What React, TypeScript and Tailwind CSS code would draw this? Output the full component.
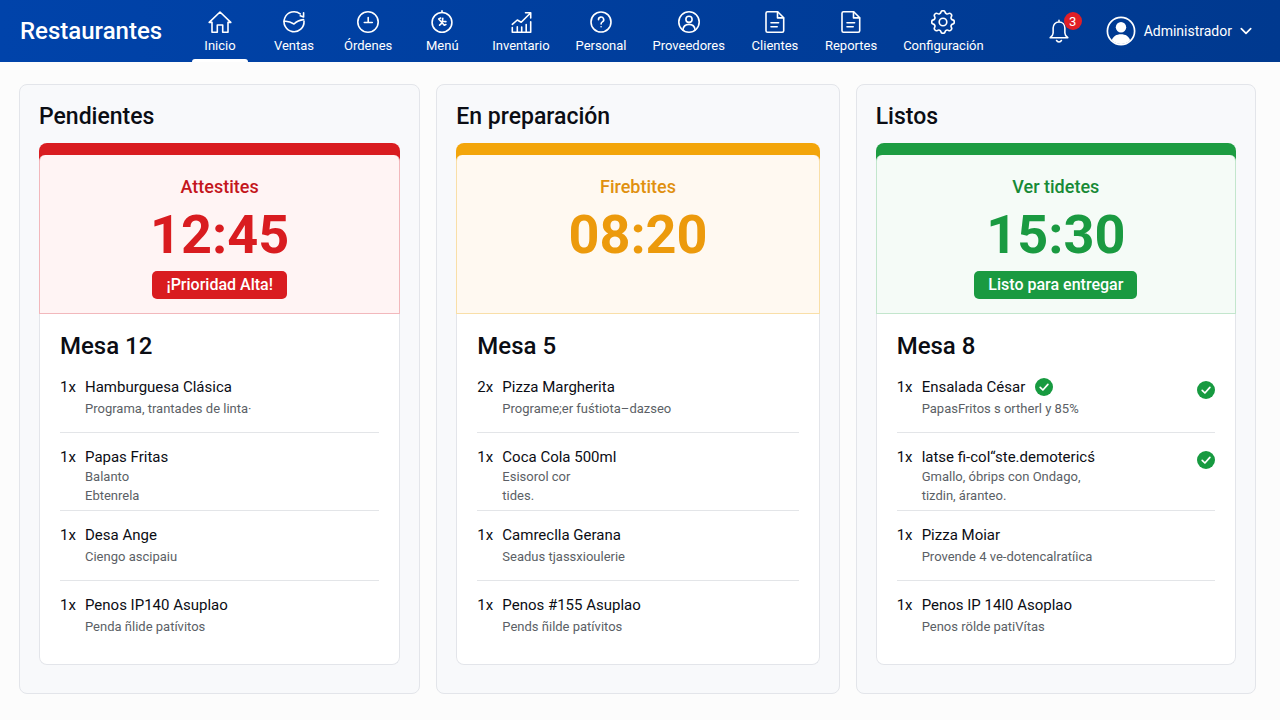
import { type ReactNode } from "react";
import { clsx } from "clsx";

// ---------------------------------------------------------------- icons

interface GlyphProps {
  readonly children: ReactNode;
  readonly viewBox?: string;
  readonly className?: string;
}

function Glyph({ children, viewBox = "0 0 24 24", className = "size-6 stroke-[1.6]" }: GlyphProps) {
  return (
    <svg
      aria-hidden
      viewBox={viewBox}
      fill="none"
      stroke="currentColor"
      strokeLinecap="round"
      strokeLinejoin="round"
      className={clsx("shrink-0", className)}
    >
      {children}
    </svg>
  );
}

const IconHome = () => (
  <Glyph>
    <path d="M1.2 12.4 12 2l10.8 10.4H20v9.9h-5.3V15H9.3v7.3H4v-9.9z" />
  </Glyph>
);

const IconSales = () => (
  <Glyph>
    <path d="M18.2 3.9A10 10 0 1 0 22 11" />
    <path d="M2.2 11.4c3-.4 6.6.6 9.8 2.6 2.6-2.6 5.6-4 9.6-4.4" />
    <path d="M18.3 5.700 21.600 7V2.800" />
  </Glyph>
);

const IconOrders = () => (
  <Glyph>
    <circle cx="12" cy="12" r="10.2" />
    <path d="M12.2 7.6v4.9M8.300 12.500h8" />
  </Glyph>
);

const IconMenu = () => (
  <Glyph>
    <circle cx="12" cy="12.400" r="9.900" />
    <path d="M12 .8v1.700" />
    <path d="m8.700 9 5.600 6.200M8.700 9l2-.9M12.800 8.300l-.4 2.900 3.500.4M9.600 15.200l1.700-1.500M14.300 15.200l1.600-.6" />
  </Glyph>
);

const IconInventory = () => (
  <Glyph>
    <path d="m3.300 14.300 5-4.300 3.900 2.300 9.300-9.300M16.500 2.800h5.200V8" />
    <path d="M3.300 17.500v4.800h18.400V11.800M8.300 16.700v5.600M12.700 17v5.300M17.200 14.500v7.800" />
  </Glyph>
);

const IconHelp = () => (
  <Glyph>
    <circle cx="12" cy="12" r="10" />
    <path d="M9.500 9.700a2.600 2.600 0 1 1 3.900 2.200c-.9.500-1.300 1-1.300 2.100M12.100 16.700v.1" />
  </Glyph>
);

const IconSuppliers = () => (
  <Glyph>
    <circle cx="12" cy="12" r="10.200" />
    <circle cx="12" cy="9.300" r="3.100" />
    <path d="M5.900 20c.4-3.600 2.800-5.600 6.100-5.600s5.700 2 6.100 5.600" />
  </Glyph>
);

const IconFile = () => (
  <Glyph>
    <path d="M4.500 1.700h10.200l6 6v13.100c0 .9-.6 1.500-1.500 1.500H4.500c-.9 0-1.500-.6-1.500-1.500V3.200c0-.9.600-1.500 1.500-1.500z" />
    <path d="M14.500 1.900v6h6M8 12.800h7.600M8 16.800h6.200" />
  </Glyph>
);

const IconGear = () => (
  <Glyph viewBox="2.5 2.5 19 19" className="size-6 stroke-[1.3]">
    <path d="M10.325 4.317c.426-1.756 2.924-1.756 3.350 0a1.724 1.724 0 0 0 2.573 1.066c1.543-.94 3.310.826 2.370 2.370a1.724 1.724 0 0 0 1.065 2.572c1.756.426 1.756 2.924 0 3.350a1.724 1.724 0 0 0-1.066 2.573c.94 1.543-.826 3.310-2.370 2.370a1.724 1.724 0 0 0-2.572 1.065c-.426 1.756-2.924 1.756-3.350 0a1.724 1.724 0 0 0-2.573-1.066c-1.543.94-3.310-.826-2.370-2.370a1.724 1.724 0 0 0-1.065-2.572c-1.756-.426-1.756-2.924 0-3.350a1.724 1.724 0 0 0 1.066-2.573c-.94-1.543.826-3.310 2.370-2.370.996.608 2.296.07 2.572-1.065z" />
    <circle cx="12" cy="12" r="3" />
  </Glyph>
);

const IconBell = () => (
  <Glyph viewBox="0 0 24 28" className="h-[26px] w-[22px] stroke-[1.7]">
    <path d="M12 2.400v1.800M12 4.200c-3.900 0-6.400 2.800-6.400 6.600v5.400c0 2.100-1.100 3.400-3.200 5.100h19.200c-2.100-1.700-3.200-3-3.200-5.100v-5.400c0-3.800-2.500-6.600-6.400-6.600z" />
    <path d="M9.300 24.300c.5 1.100 1.500 1.600 2.700 1.600s2.200-.5 2.700-1.600" />
  </Glyph>
);

const IconAvatar = () => (
  <Glyph viewBox="0 0 30 30" className="size-[30px] stroke-[1.7]">
    <circle cx="15" cy="15" r="13.600" />
    <circle cx="15" cy="11.200" r="5.200" fill="currentColor" stroke="none" />
    <path
      d="M5.900 24.300c1-3.900 4.600-6 9.100-6s8.100 2.100 9.100 6a13 13 0 0 1-18.200 0z"
      fill="currentColor"
      stroke="none"
    />
  </Glyph>
);

const IconChevronDown = () => (
  <Glyph viewBox="0 0 12 12" className="size-3 stroke-[1.7]">
    <path d="m1.300 3.600 4.700 4.700 4.700-4.700" />
  </Glyph>
);

function ReadyMark() {
  return (
    <svg role="img" aria-label="Listo" viewBox="0 0 18 18" className="size-[18px] shrink-0">
      <circle cx="9" cy="9" r="9" fill="#179a40" />
      <path
        d="m5.200 9.400 2.700 2.600 5-5.600"
        fill="none"
        stroke="#fff"
        strokeWidth="1.7"
        strokeLinecap="round"
        strokeLinejoin="round"
      />
    </svg>
  );
}

// ---------------------------------------------------------------- data

const NAV: ReadonlyArray<{ label: string; icon: ReactNode; active?: boolean }> = [
  { label: "Inicio", icon: <IconHome />, active: true },
  { label: "Ventas", icon: <IconSales /> },
  { label: "Órdenes", icon: <IconOrders /> },
  { label: "Menú", icon: <IconMenu /> },
  { label: "Inventario", icon: <IconInventory /> },
  { label: "Personal", icon: <IconHelp /> },
  { label: "Proveedores", icon: <IconSuppliers /> },
  { label: "Clientes", icon: <IconFile /> },
  { label: "Reportes", icon: <IconFile /> },
  { label: "Configuración", icon: <IconGear /> },
];

interface OrderItem {
  readonly qty: number;
  readonly name: string;
  readonly notes: ReadonlyArray<string>;
  readonly inlineMark?: boolean;
  readonly ready?: boolean;
}

type Tone = "red" | "amber" | "green";

interface Ticket {
  readonly column: string;
  readonly status: string;
  readonly time: string;
  readonly badge?: string;
  readonly table: string;
  readonly tone: Tone;
  readonly items: ReadonlyArray<OrderItem>;
}

const TONES: Record<Tone, { bar: string; panel: string; label: string; time: string; badge: string }> = {
  red: {
    bar: "bg-[#d91c20]",
    panel: "bg-[#fff4f4] border-[#f2b8bc]",
    label: "text-[#c4161c]",
    time: "text-[#d91c20]",
    badge: "bg-[#d91c20]",
  },
  amber: {
    bar: "bg-[#f3a50a]",
    panel: "bg-[#fff9f1] border-[#f9dfa8]",
    label: "text-[#e0900f]",
    time: "text-[#ec9a0c]",
    badge: "bg-[#f3a50a]",
  },
  green: {
    bar: "bg-[#1d9c42]",
    panel: "bg-[#f5fbf7] border-[#c3e6cd]",
    label: "text-[#178a36]",
    time: "text-[#1a9a41]",
    badge: "bg-[#1a9a41]",
  },
};

const TICKETS: ReadonlyArray<Ticket> = [
  {
    column: "Pendientes",
    status: "Attestites",
    time: "12:45",
    badge: "¡Prioridad Alta!",
    table: "Mesa 12",
    tone: "red",
    items: [
      { qty: 1, name: "Hamburguesa Clásica", notes: ["Programa, trantades de linta·"] },
      { qty: 1, name: "Papas Fritas", notes: ["Balanto", "Ebtenrela"] },
      { qty: 1, name: "Desa Ange", notes: ["Ciengo ascipaiu"] },
      { qty: 1, name: "Penos IP140 Asuplao", notes: ["Penda ñlide patívitos"] },
    ],
  },
  {
    column: "En preparación",
    status: "Firebtites",
    time: "08:20",
    table: "Mesa 5",
    tone: "amber",
    items: [
      { qty: 2, name: "Pizza Margherita", notes: ["Programe;er fuśtiota–dazseo"] },
      { qty: 1, name: "Coca Cola 500ml", notes: ["Esisorol cor", "tides."] },
      { qty: 1, name: "Camreclla Gerana", notes: ["Seadus tjassxioulerie"] },
      { qty: 1, name: "Penos #155 Asuplao", notes: ["Pends ñilde patívitos"] },
    ],
  },
  {
    column: "Listos",
    status: "Ver tidetes",
    time: "15:30",
    badge: "Listo para entregar",
    table: "Mesa 8",
    tone: "green",
    items: [
      {
        qty: 1,
        name: "Ensalada César",
        notes: ["PapasFritos s ortherl y 85%"],
        inlineMark: true,
        ready: true,
      },
      {
        qty: 1,
        name: "latse fi-col“ste.demotericś",
        notes: ["Gmallo, óbrips con Ondago,", "tizdin, áranteo."],
        ready: true,
      },
      { qty: 1, name: "Pizza Moiar", notes: ["Provende 4 ve-dotencalratíica"] },
      { qty: 1, name: "Penos IP 14l0 Asoplao", notes: ["Penos rölde patiVítas"] },
    ],
  },
];

// ---------------------------------------------------------------- header

function TopBar() {
  return (
    <header className="flex h-[62px] items-stretch bg-linear-to-r from-[#0043aa] to-[#00398f] px-5 text-white">
      <div className="flex w-[163px] shrink-0 items-center text-2xl font-medium">Restaurantes</div>
      <nav aria-label="Principal" className="flex">
        {NAV.map((n) => (
          <a
            key={n.label}
            href="#"
            aria-current={n.active ? "page" : undefined}
            className="flex min-w-[74px] flex-col items-center px-[13px] pt-2.5 text-[13px] leading-4"
          >
            {n.icon}
            <span className="mt-1">{n.label}</span>
            {n.active ? <span className="-mx-1 mt-auto h-[3px] self-stretch rounded-t-sm bg-white" /> : null}
          </a>
        ))}
      </nav>
      <div className="ml-auto flex items-center gap-9">
        <button type="button" aria-label="Notificaciones" className="relative">
          <IconBell />
          <span className="absolute -top-1.5 left-4 flex size-[18px] items-center justify-center rounded-full bg-[#e01f27] text-[13px] leading-none">
            3
          </span>
        </button>
        <button type="button" className="flex items-center gap-2 pr-2 text-sm">
          <IconAvatar />
          Administrador
          <IconChevronDown />
        </button>
      </div>
    </header>
  );
}

// ---------------------------------------------------------------- board

function ItemRow({ item }: { readonly item: OrderItem }) {
  const tight = item.notes.length > 1;
  return (
    <li
      className={clsx(
        "flex border-b border-[#e3e5e8] pt-3.5 first:pt-0 last:border-b-0 last:pb-0",
        tight ? "pb-[5px]" : "pb-3.5",
      )}
    >
      <span className="w-[25px] shrink-0 text-[15px] leading-5 text-[#0b0d14]">{item.qty}x</span>
      <div className="min-w-0 flex-1">
        <div className="flex items-center gap-2.5 text-[15px] leading-5 text-[#0b0d14]">
          {item.name}
          {item.inlineMark ? <ReadyMark /> : null}
        </div>
        <div className={clsx("text-[13px] leading-[19px] text-[#5b5f66]", !tight && "mt-0.5")}>
          {item.notes.map((line) => (
            <p key={line}>{line}</p>
          ))}
        </div>
      </div>
      {item.ready ? (
        <div className="pt-1">
          <ReadyMark />
        </div>
      ) : null}
    </li>
  );
}

function TicketColumn({ ticket }: { readonly ticket: Ticket }) {
  const tone = TONES[ticket.tone];
  return (
    <section className="rounded-lg border border-[#e3e5ea] bg-[#f8f9fb] px-[19px] pt-4 pb-7">
      <h2 className="mb-2.5 text-[23px] leading-8 font-medium text-[#0b0d14]">{ticket.column}</h2>
      <article className="rounded-lg bg-white">
        <div className={clsx("rounded-t-lg pt-3", tone.bar)}>
          <div
            className={clsx(
              "flex h-[159px] flex-col items-center rounded-t-md border border-t-0 pt-5",
              tone.panel,
            )}
          >
            <div className={clsx("text-lg leading-6 font-medium", tone.label)}>{ticket.status}</div>
            <div className={clsx("mt-2 text-[54px] leading-14 font-bold", tone.time)}>{ticket.time}</div>
            {ticket.badge ? (
              <div
                className={clsx(
                  "mt-2 rounded-[5px] px-3.5 py-0.5 text-base leading-6 font-medium text-white",
                  tone.badge,
                )}
              >
                {ticket.badge}
              </div>
            ) : null}
          </div>
        </div>
        <div className="rounded-b-lg border border-t-0 border-[#e3e5ea] px-5 pt-4 pb-7">
          <h3 className="mb-[15px] text-2xl leading-8 font-medium text-[#0b0d14]">{ticket.table}</h3>
          <ul>
            {ticket.items.map((item) => (
              <ItemRow key={item.name} item={item} />
            ))}
          </ul>
        </div>
      </article>
    </section>
  );
}

export default function App() {
  return (
    <div className="min-h-screen bg-[#fcfcfc] font-[Roboto,'Liberation_Sans',sans-serif]">
      <TopBar />
      <main className="grid grid-cols-[402fr_404fr_401fr] gap-4 pt-[22px] pr-6 pb-6 pl-[19px]">
        {TICKETS.map((t) => (
          <TicketColumn key={t.column} ticket={t} />
        ))}
      </main>
    </div>
  );
}
